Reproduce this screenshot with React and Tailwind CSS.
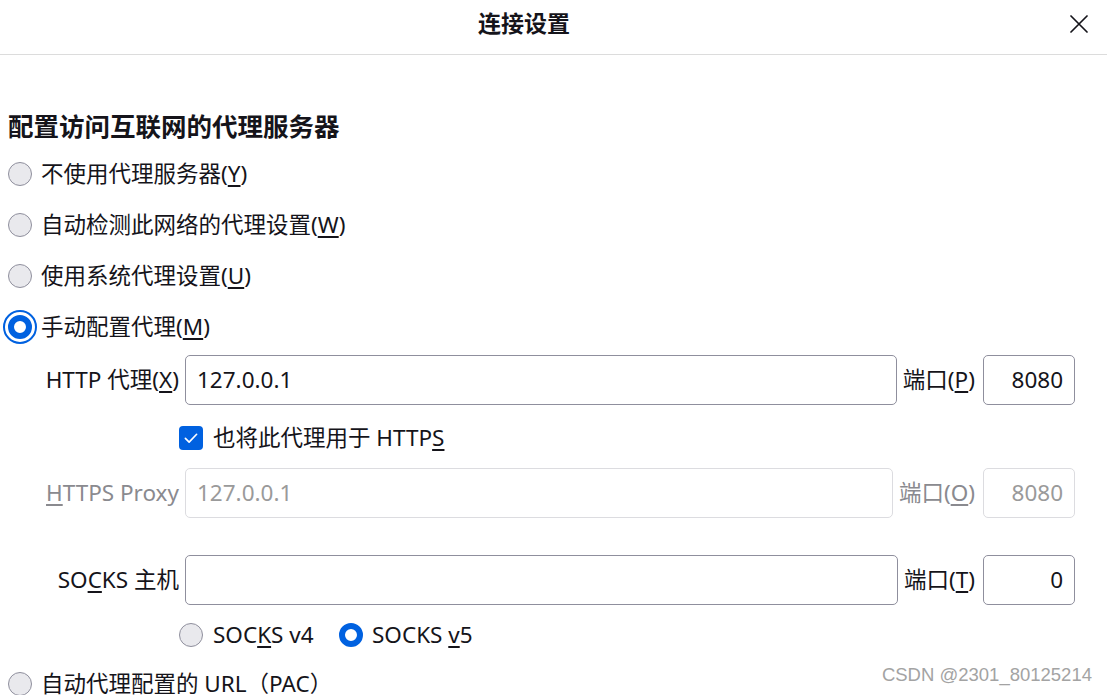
function Radio({ checked }) {
  if (checked) {
    return (
      <span className="flex h-[24px] w-[24px] shrink-0 items-center justify-center rounded-full border-[6px] border-[#0061e0] bg-white" />
    )
  }
  return <span className="h-[24px] w-[24px] shrink-0 rounded-full border border-[#8f8f9d] bg-[#e9e9ed]" />
}

function Check() {
  return (
    <span className="flex h-[24px] w-[24px] shrink-0 items-center justify-center rounded-[4px] bg-[#0061e0]">
      <svg viewBox="0 0 24 24" className="h-[18px] w-[18px]" fill="none" stroke="white" strokeWidth="2.2" strokeLinecap="round" strokeLinejoin="round">
        <path d="M4.5 12.5l5 5L19.5 7" />
      </svg>
    </span>
  )
}

function RadioRow({ label, ak, checked, focus }) {
  return (
    <div className="flex h-[51px] items-center gap-[9px] pl-[8px]">
      {focus ? (
        <span className="-ml-[5px] -mr-[5px] flex h-[34px] w-[34px] shrink-0 items-center justify-center rounded-full border-2 border-[#0061e0] bg-white">
          <Radio checked />
        </span>
      ) : (
        <Radio checked={checked} />
      )}
      <span>
        {label}
        <u className="underline-offset-[3px]">{ak}</u>)
      </span>
    </div>
  )
}

function ProxyRow({ label, value, portLabel, port, disabled }) {
  const box = disabled
    ? 'border-[#dcdce0] text-[#9a9a9a]'
    : 'border-[#8f8f9d] text-[#15141a]'
  return (
    <div className={`flex h-[50px] items-stretch pr-[32px] ${disabled ? 'text-[#8a8a8f]' : ''}`}>
      <div className="flex w-[185px] shrink-0 items-center justify-end pr-[6px]">{label}</div>
      <div className={`flex flex-1 items-center rounded-[5px] border pl-[11px] ${box}`}>{value}</div>
      <div className="flex items-center pl-[6px] pr-[8px]">{portLabel}</div>
      <div className={`flex w-[92px] shrink-0 items-center justify-end rounded-[5px] border pr-[11px] ${box}`}>{port}</div>
    </div>
  )
}

export default function App() {
  return (
    <div className="relative h-[695px] overflow-hidden bg-white font-['Noto_Sans','Noto_Sans_CJK_SC',sans-serif] text-[22.5px] text-[#15141a]">
      {/* header */}
      <div className="flex h-[55px] items-center border-b border-[#dcdcdc] pb-[7px]">
        <div className="flex-1" />
        <h1 className="mr-[40px] text-[23px] font-bold">连接设置</h1>
        <div className="flex flex-1 justify-end pr-[19px]">
          <svg viewBox="0 0 18 18" className="h-[18px] w-[18px]" fill="none" stroke="#15141a" strokeWidth="1.7" strokeLinecap="round">
            <path d="M1 1l16 16M17 1L1 17" />
          </svg>
        </div>
      </div>

      <div className="pt-[49px]">
        <h2 className="flex h-[44px] items-center pl-[8px] text-[25.5px] font-bold">配置访问互联网的代理服务器</h2>

        <RadioRow label="不使用代理服务器(" ak="Y" />
        <RadioRow label="自动检测此网络的代理设置(" ak="W" />
        <RadioRow label="使用系统代理设置(" ak="U" />
        <RadioRow label="手动配置代理(" ak="M" focus />

        <div className="mt-[3px]">
          <ProxyRow
            label={<span>HTTP 代理(<u className="underline-offset-[3px]">X</u>)</span>}
            value="127.0.0.1"
            portLabel={<span>端口(<u className="underline-offset-[3px]">P</u>)</span>}
            port="8080"
          />
        </div>

        <div className="flex h-[63px] items-center gap-[10px] pl-[179px] pt-[3px]">
          <Check />
          <span>也将此代理用于 HTTP<u className="underline-offset-[3px]">S</u></span>
        </div>

        <ProxyRow
          disabled
          label={<span><u className="underline-offset-[3px]">H</u>TTPS Proxy</span>}
          value="127.0.0.1"
          portLabel={<span>端口(<u className="underline-offset-[3px]">O</u>)</span>}
          port="8080"
        />

        <div className="mt-[37px]">
          <ProxyRow
            label={<span>SO<u className="underline-offset-[3px]">C</u>KS 主机</span>}
            value=""
            portLabel={<span>端口(<u className="underline-offset-[3px]">T</u>)</span>}
            port="0"
          />
        </div>

        <div className="flex h-[59px] items-center pl-[179px]">
          <Radio />
          <span className="ml-[10px] w-[126px]">SOC<u className="underline-offset-[3px]">K</u>S v4</span>
          <Radio checked />
          <span className="ml-[9px]">SOCKS <u className="underline-offset-[3px]">v</u>5</span>
        </div>

        <div className="flex h-[40px] items-center gap-[9px] pl-[8px]">
          <Radio />
          <span>自动代理配置的 URL（PAC）</span>
        </div>
      </div>

      <div className="absolute bottom-[6px] right-[15px] font-['Liberation_Sans',sans-serif] text-[18.5px] text-[#a3a3a3]">
        CSDN @2301_80125214
      </div>
    </div>
  )
}
